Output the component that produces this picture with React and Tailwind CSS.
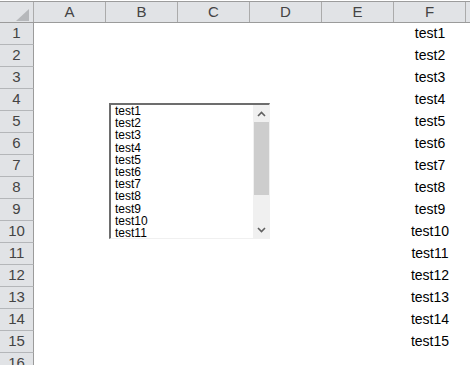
const cols = ['A', 'B', 'C', 'D', 'E', 'F']
const rows = Array.from({ length: 16 }, (_, i) => i + 1)
const items = Array.from({ length: 11 }, (_, i) => `test${i + 1}`)

function HeaderRow() {
  return (
    <div className="flex h-[22px] mt-[1px] border-t border-t-[#9c9c9c] border-b border-b-[#9b9b9b] bg-[#e1e3e6]">
      <div className="relative w-[34px] shrink-0 border-r border-[#ababab]">
        <svg className="absolute left-[16px] top-[7px]" width="13" height="12" viewBox="0 0 13 12">
          <polygon points="13,0 13,12 0,12" fill="#b6b8bb" />
        </svg>
      </div>
      {cols.map(c => (
        <div key={c} className="w-[72px] shrink-0 border-r border-[#ababab] flex items-center justify-center text-[15px] text-[#444]">
          {c}
        </div>
      ))}
      <div className="flex-1" />
    </div>
  )
}

function ListBox() {
  return (
    <div className="absolute left-[109px] top-[103px] w-[161px] h-[136px] bg-white border-t-2 border-l-2 border-t-[#6d6d6d] border-l-[#6d6d6d] border-r border-b border-r-[#f0f0f0] border-b-[#f0f0f0] flex">
      <div className="flex-1 pl-[4px] overflow-hidden font-['Liberation_Sans',sans-serif] text-[12px] leading-[12.2px] text-black">
        {items.map(t => (
          <div key={t}>{t}</div>
        ))}
      </div>
      <div className="w-[16px] bg-[#f0f0f0] flex flex-col items-center">
        <div className="h-[17px] flex items-center justify-center">
          <svg width="9" height="6" viewBox="0 0 9 6">
            <path d="M1 5 L4.5 1.5 L8 5" stroke="#606060" strokeWidth="1.6" fill="none" />
          </svg>
        </div>
        <div className="w-[15px] h-[73px] bg-[#cdcdcd]" />
        <div className="flex-1" />
        <div className="h-[17px] flex items-center justify-center">
          <svg width="9" height="6" viewBox="0 0 9 6">
            <path d="M1 1 L4.5 4.5 L8 1" stroke="#606060" strokeWidth="1.6" fill="none" />
          </svg>
        </div>
      </div>
    </div>
  )
}

export default function App() {
  return (
    <div className="relative w-[470px] h-[365px] overflow-hidden bg-white font-['Liberation_Sans',sans-serif]">
      <HeaderRow />
      {rows.map(r => (
        <div key={r} className="flex h-[22px] shrink-0">
          <div className="w-[34px] shrink-0 border-r border-r-[#9b9b9b] border-b border-b-[#b4b6b9] bg-[#e1e3e6] flex items-center justify-center text-[15px] text-[#444] pb-[1px]">
            {r}
          </div>
          {cols.map(c => (
            <div key={c} className="w-[72px] shrink-0 flex items-center justify-center text-[14px] text-black pb-[1px]">
              {c === 'F' && r <= 15 ? `test${r}` : ''}
            </div>
          ))}
        </div>
      ))}
      <ListBox />
    </div>
  )
}
